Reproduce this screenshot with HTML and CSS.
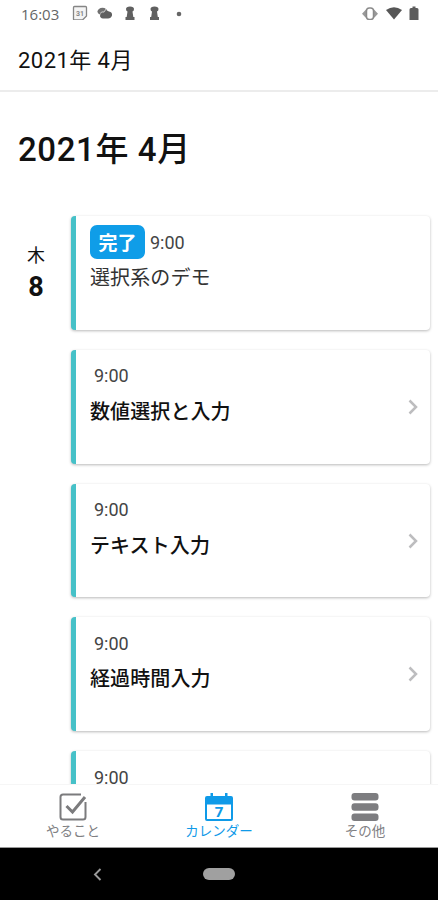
FILE: index.html
```html
<!DOCTYPE html>
<html lang="ja">
<head>
<meta charset="utf-8">
<meta name="viewport" content="width=device-width, initial-scale=1">
<title>カレンダー</title>
<link rel="stylesheet" href="styles.css">
</head>
<body>
<div class="phone">
  <div class="status">
    <span class="clock">16:03</span>
    <svg class="status-left" width="120" height="20" viewBox="0 0 120 20">
      <path d="M3.500 6.500h11q1 0 1 1v8.500l-4 4h-8q-1 0-1-1V7.500q0-1 1-1z" fill="#f4f4f4" stroke="#858585" stroke-width="1.300" stroke-linejoin="round"/>
      <text x="5" y="15.500" class="tiny">31</text>
      <ellipse cx="31.500" cy="11.500" rx="5" ry="3.700" fill="#707070"/>
      <path d="M29 15.500q1-3 4-2.500 2-3.500 5-1.500 3.500.5 3 4-1 3-4 3h-5q-3-.5-3-3z" fill="#5f5f5f"/>
      <path d="M29 13.500q2-2.500 4-1.500l2-3" fill="none" stroke="#ddd" stroke-width=".8"/>
      <g id="piece" fill="#606060"><path d="M55 9q0-2.500 4-2.500t4 2.500q0 2-1.500 2.500l.8 5.500H63.500v3h-9v-3h1.200l.8-5.500Q55 11 55 9z"/></g>
      <use href="#piece" x="24.500"/>
      <circle cx="108" cy="14" r="2.300" fill="#666"/>
    </svg>
    <svg class="status-right" width="60" height="20" viewBox="0 0 60 20">
      <path d="M5 9.500L1 13.700 5 18zM13 9.500l4 4.200-4 4.300z" fill="#999"/>
      <rect x="5.500" y="8" width="7" height="11.500" rx="2.800" fill="#fff" stroke="#8a8a8a" stroke-width="1.500"/>
      <path d="M25 10q8-5.500 16 0l-8 9.500z" fill="#565656"/>
      <path d="M50 8h1.500V6.500h3V8H56q1.500 0 1.500 1.500v10.500q0 1-1 1h-7q-1 0-1-1V9.500Q48.500 8 50 8z" fill="#5c5c5c"/>
    </svg>
  </div>
  <header class="appbar">2021年 4月</header>
  <main class="content">
    <h1>2021年 4月</h1>
    <section class="day">
      <div class="date"><span class="weekday">木</span><span class="num">8</span></div>
      <div class="cards">
        <article class="card done">
          <div class="meta"><span class="badge">完了</span><time>9:00</time></div>
          <div class="title">選択系のデモ</div>
        </article>
        <article class="card">
          <div class="meta"><time>9:00</time></div>
          <div class="title">数値選択と入力</div>
          <svg class="chev" width="10" height="16" viewBox="0 0 10 16"><path d="M1.500 1.500L8 8l-6.500 6.500"/></svg>
        </article>
        <article class="card">
          <div class="meta"><time>9:00</time></div>
          <div class="title">テキスト入力</div>
          <svg class="chev" width="10" height="16" viewBox="0 0 10 16"><path d="M1.500 1.500L8 8l-6.500 6.500"/></svg>
        </article>
        <article class="card">
          <div class="meta"><time>9:00</time></div>
          <div class="title">経過時間入力</div>
          <svg class="chev" width="10" height="16" viewBox="0 0 10 16"><path d="M1.500 1.500L8 8l-6.500 6.500"/></svg>
        </article>
        <article class="card">
          <div class="meta"><time>9:00</time></div>
        </article>
      </div>
    </section>
  </main>
  <nav class="tabs">
    <div class="tab">
      <svg width="28" height="28" viewBox="0 0 28 28" fill="none" stroke="#7b7b7d"><path d="M22 1.500H4Q1.500 1.500 1.500 4v20Q1.500 26.500 4 26.500h20q2.500 0 2.500-2.500V9" stroke-width="2"/><path d="M7.500 13l6 6L26 4" stroke-width="3"/></svg>
      <span>やること</span>
    </div>
    <div class="tab active">
      <svg width="28" height="28" viewBox="0 0 28 28"><path d="M5.500 0h2.500v3h12V0h2.500v3H26q2 0 2 2v21q0 2-2 2H2q-2 0-2-2V5q0-2 2-2h3.500zM2 11.500V26h24V11.500z" fill="#0f9ae8" fill-rule="evenodd"/><text x="14" y="24" class="seven" text-anchor="middle">7</text></svg>
      <span>カレンダー</span>
    </div>
    <div class="tab">
      <svg width="28" height="28" viewBox="0 0 28 28" fill="#7d7d80"><rect y="0" x=".5" width="27" height="7.500" rx="3"/><rect y="10.200" x=".5" width="27" height="7.500" rx="3"/><rect y="20.400" x=".5" width="27" height="7.500" rx="3"/></svg>
      <span>その他</span>
    </div>
  </nav>
  <div class="sysnav">
    <svg width="9" height="13" viewBox="0 0 9 13"><path d="M7.500 1L2 6.500 7.500 12" fill="none" stroke="#999" stroke-width="1.900"/></svg>
    <span class="pill"></span>
    <span></span>
  </div>
</div>
</body>
</html>
```
FILE: styles.css
```css
* { box-sizing: border-box; }
body { margin: 0; font-family: Roboto, "Noto Sans CJK JP", sans-serif; color: #111; background: #fff; }
.phone { width: 438px; height: 900px; display: flex; flex-direction: column; overflow: hidden; }
.status { height: 28px; display: flex; align-items: flex-start; padding: 0 17px 0 21px; flex: none; }
.clock { width: 50px; font: 500 15px/29px "Open Sans", sans-serif; color: #666; }
.status-right { margin-left: auto; }
.tiny { font: 700 7px Roboto, sans-serif; fill: #888; }
.appbar { flex: none; height: 64px; padding-left: 18px; font-size: 22px; letter-spacing: .45px; line-height: 65px; border-bottom: 2px solid #ececec; }
.content { flex: 1; min-height: 0; overflow: hidden; }
h1 { margin: 0; padding: 33px 0 0 18px; height: 124px; font-size: 33px; letter-spacing: .6px; line-height: 50px; font-weight: 500; }
.day { display: flex; }
.date { width: 71px; padding: 26px 0 0 1px; display: flex; flex-direction: column; align-items: center; }
.weekday { font-size: 18px; line-height: 28px; }
.num { font-size: 27px; line-height: 34px; font-weight: 700; }
.cards { width: 359px; display: flex; flex-direction: column; gap: 20px; }
.card { position: relative; height: 113.800px; flex: none; padding: 9px 0 0 14px; border-left: 5px solid #46c1c8; border-radius: 4px; background: #fff; box-shadow: 0 1px 3px rgba(0,0,0,.28); }
.meta { height: 34px; display: flex; align-items: center; gap: 5px; padding-left: 4px; }
.done .meta { padding-left: 0; }
time { font-size: 18px; color: #444; }
.badge { width: 55px; height: 34px; border-radius: 7px; background: #0f9de8; color: #fff; font-size: 19px; line-height: 37px; font-weight: 700; text-align: center; }
.title { padding-top: 2px; font-size: 20px; letter-spacing: .1px; line-height: 34px; font-weight: 500; }
.done .title { font-weight: 400; color: #333; }
.chev { position: absolute; right: 12px; top: 49px; fill: none; stroke: #bdbdbf; stroke-width: 2.500; }
.tabs { flex: none; height: 64px; display: grid; grid-template-columns: repeat(3, 1fr); background: #fff; border-top: 1px solid #f6f6f6; border-bottom: 1px solid #999; }
.tab { display: flex; flex-direction: column; align-items: center; padding-top: 8px; font-size: 13.500px; line-height: 20px; color: #808083; }
.tab span { font-weight: 400; }
.tab.active { color: #0f9ae8; }
.seven { font: 700 15px "Open Sans", sans-serif; fill: #0f9ae8; }
.sysnav { flex: none; height: 52px; background: #000; display: grid; grid-template-columns: 194px 50px 194px; place-items: center; }
.pill { width: 32px; height: 12px; border-radius: 6px; background: #a0a0a0; }
```
